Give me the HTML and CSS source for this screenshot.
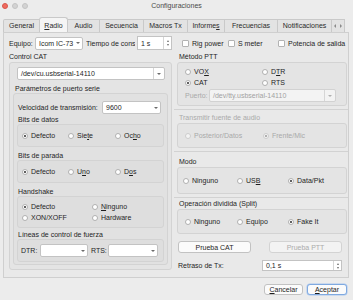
FILE: index.html
```html
<!DOCTYPE html>
<html>
<head>
    <title>Configuraciones</title>
    <link rel="stylesheet" href="styles.css">
</head>
<body>
    <div class="titlebar">
        <div class="lights">
            <span class="light red"></span>
            <span class="light"></span>
            <span class="light"></span>
        </div>
        <div class="title">Configuraciones</div>
        <div></div>
    </div>

    <div class="tabs">
        <div class="tab t-general">General</div>
        <div class="tab t-radio active"><u>R</u>adio</div>
        <div class="tab t-audio">Audio</div>
        <div class="tab t-secuencia">Secuencia</div>
        <div class="tab t-macros">Macros Tx</div>
        <div class="tab t-informes">Informe<u>s</u></div>
        <div class="tab t-frecuencias">Frecuencias</div>
        <div class="tab t-notif">Notificaciones</div>
        <div class="tab-arrows"><span class="arr left"></span><span class="arr right"></span></div>
    </div>

    <div class="pane">
        <div class="top-row">
            <span class="lbl-equipo">Equipo:</span>
            <div class="combo popup c-equipo"><span>Icom IC-73</span><span class="caret"></span></div>
            <span class="lbl-tiempo">Tiempo de cons</span>
            <div class="spin s-tiempo"><span>1 s</span><span class="stepper"><i class="up"></i><i class="down"></i></span></div>
            <label class="check-opt c-rig"><span class="check"></span>Rig power</label>
            <label class="check-opt c-smeter"><span class="check"></span>S meter</label>
            <label class="check-opt c-pot"><span class="check"></span>Potencia de salida</label>
        </div>

        <div class="columns">
            <!-- columna izquierda -->
            <div class="col-left">
                <div class="group-title">Control CAT</div>
                <div class="box cat-box">
                    <div class="combo split c-dev"><span>/dev/cu.usbserial-14110</span><span class="caret"></span></div>
                    <div class="group-title sub">Parámetros de puerto serie</div>
                    <div class="box serial-box">
                        <div class="row-vel">
                            <span class="lbl-vel">Velocidad de transmisión:</span>
                            <div class="combo popup c-vel"><span>9600</span><span class="caret"></span></div>
                        </div>
                        <div class="group-title inner t1">Bits de datos</div>
                        <div class="box opts three">
                            <label class="opt"><span class="radio on"></span>Defecto</label>
                            <label class="opt"><span class="radio"></span>Sie<u>t</u>e</label>
                            <label class="opt"><span class="radio"></span>Oc<u>h</u>o</label>
                        </div>
                        <div class="group-title inner">Bits de parada</div>
                        <div class="box opts three">
                            <label class="opt"><span class="radio on"></span>Defecto</label>
                            <label class="opt"><span class="radio"></span>U<u>n</u>o</label>
                            <label class="opt"><span class="radio"></span>D<u>o</u>s</label>
                        </div>
                        <div class="group-title inner">Handshake</div>
                        <div class="box opts two-left">
                            <label class="opt"><span class="radio on"></span>Defecto</label>
                            <label class="opt"><span class="radio"></span><u>N</u>inguno</label>
                            <label class="opt"><span class="radio"></span>XON/XOFF</label>
                            <label class="opt"><span class="radio"></span>Hardware</label>
                        </div>
                        <div class="group-title inner t-lineas">Líneas de control de fuerza</div>
                        <div class="box lineas">
                            <span class="lbl-dtr">DTR:</span>
                            <div class="combo popup c-dtr"><span></span><span class="caret"></span></div>
                            <span class="lbl-rts">RTS:</span>
                            <div class="combo popup c-rts"><span></span><span class="caret"></span></div>
                        </div>
                    </div>
                </div>
            </div>

            <!-- columna derecha -->
            <div class="col-right">
                <div class="group-title">Método PTT</div>
                <div class="box ptt-box">
                    <div class="opts-grid ptt">
                        <label class="opt"><span class="radio"></span>VO<u>X</u></label>
                        <label class="opt"><span class="radio"></span>D<u>T</u>R</label>
                        <label class="opt"><span class="radio on"></span>CAT</label>
                        <label class="opt"><span class="radio"></span>RTS</label>
                    </div>
                    <div class="row-puerto">
                        <span class="lbl-puerto disabled">Puerto:</span>
                        <div class="combo split off c-puerto"><span>/dev/tty.usbserial-14110</span><span class="caret"></span></div>
                    </div>
                </div>
                <div class="sep first"></div>

                <div class="group-title disabled t-audio-src">Transmitir fuente de audio</div>
                <div class="box opts right fuente">
                    <label class="opt disabled"><span class="radio off"></span>Posterior/Datos</label>
                    <label class="opt disabled"><span class="radio off on"></span>Frente/Mic</label>
                </div>
                <div class="sep"></div>

                <div class="group-title t-modo">Modo</div>
                <div class="box opts right modo">
                    <label class="opt"><span class="radio"></span>Ninguno</label>
                    <label class="opt"><span class="radio"></span>US<u>B</u></label>
                    <label class="opt"><span class="radio on"></span>Data/Pkt</label>
                </div>
                <div class="sep"></div>

                <div class="group-title t-split">Operación dividida (Split)</div>
                <div class="box opts right split-box">
                    <label class="opt"><span class="radio"></span>Ninguno</label>
                    <label class="opt"><span class="radio"></span>Equipo</label>
                    <label class="opt"><span class="radio on"></span>Fake It</label>
                </div>

                <div class="test-buttons">
                    <button class="btn">Prueba CAT</button>
                    <button class="btn off">Prueba PTT</button>
                </div>

                <div class="row-retraso">
                    <span>Retraso de Tx:</span>
                    <div class="spin s-retraso"><span>0,1 s</span><span class="stepper"><i class="up"></i><i class="down"></i></span></div>
                </div>
            </div>
        </div>
    </div>

    <div class="dialog-buttons">
        <button class="btn b-cancel"><u>C</u>ancelar</button>
        <button class="btn b-ok default"><u>A</u>ceptar</button>
    </div>
</body>
</html>
```

FILE: styles.css
```css
* {
    box-sizing: border-box;
}

body {
    margin: 0;
    width: 353px;
    height: 300px;
    overflow: hidden;
    background-color: #ececec;
    font-family: "Liberation Sans", Arial, sans-serif;
    font-size: 7px;
    color: #1e1e1e;
}

u {
    text-decoration: underline;
    text-underline-offset: 1px;
}

.disabled {
    color: #a9a9a9;
}

/* barra de título */
.titlebar {
    height: 11px;
    display: grid;
    grid-template-columns: 1fr auto 1fr;
    align-items: center;
}

.lights {
    display: flex;
    gap: 4px;
    padding-left: 2px;
}

.light {
    width: 6px;
    height: 6px;
    border-radius: 50%;
    background-color: #d3d3d3;
    border: 0.5px solid #c4c4c4;
}

.light.red {
    background-color: #ef6b5f;
    border-color: #d9554b;
}

.title {
    color: #4a4a4a;
}

/* pestañas */
.tabs {
    margin-top: 6px;
    margin-left: 3px;
    height: 15px;
    display: flex;
    align-items: flex-end;
}

.tab {
    height: 13px;
    line-height: 12px;
    text-align: center;
    background-color: #e3e3e3;
    border: 1px solid #c9c9c9;
    border-bottom: none;
    border-left: none;
    color: #2a2a2a;
}

.tab.t-general { width: 37px; border-left: 1px solid #c9c9c9; border-radius: 2px 0 0 0; }
.tab.t-radio { width: 28px; }
.tab.t-audio { width: 32px; }
.tab.t-secuencia { width: 44px; }
.tab.t-macros { width: 44px; }
.tab.t-informes { width: 37px; }
.tab.t-frecuencias { width: 53px; }
.tab.t-notif { width: 54px; }

.tab.active {
    height: 15px;
    line-height: 15px;
    background-color: #f5f5f5;
    border-radius: 3px 3px 0 0;
    border-left: 1px solid #c9c9c9;
    margin-left: -1px;
    width: 29px;
}

.tab-arrows {
    height: 13px;
    width: 13px;
    display: flex;
    align-items: center;
    justify-content: space-around;
    background-color: #e3e3e3;
    border: 1px solid #c9c9c9;
    border-bottom: none;
    border-left: none;
}

.arr {
    width: 0;
    height: 0;
    border-top: 2px solid transparent;
    border-bottom: 2px solid transparent;
}

.arr.left { border-right: 2px solid #8a8a8a; }
.arr.right { border-left: 2px solid #8a8a8a; }

/* panel */
.pane {
    margin: 0 4px 0 3px;
    height: 246px;
    border: 1px solid #cfcfcf;
    background-color: #e9e9e9;
    padding: 3px 0 0 5px;
}

.top-row {
    height: 14px;
    display: flex;
    align-items: center;
}

.lbl-equipo { width: 26px; }
.c-equipo { width: 48px; }
.lbl-tiempo {
    width: 49px;
    margin-left: 3px;
    white-space: nowrap;
    overflow: hidden;
}
.s-tiempo { width: 35px; margin-left: 2px; height: 14px; }

.check-opt {
    display: flex;
    align-items: center;
    white-space: nowrap;
}

.check {
    width: 7px;
    height: 7px;
    background-color: #fff;
    border: 1px solid #b3b3b3;
    border-radius: 1px;
    margin-right: 3px;
}

.c-rig { margin-left: 10px; width: 46px; }
.c-smeter { width: 50px; }
.c-pot { overflow: hidden; width: 70px; }

/* controles */
.combo {
    height: 13px;
    background-color: #fff;
    border: 1px solid #c3c3c3;
    border-radius: 2px;
    display: flex;
    align-items: center;
    justify-content: space-between;
    padding-left: 3px;
    white-space: nowrap;
    overflow: hidden;
}

.caret {
    width: 9px;
    height: 100%;
    display: flex;
    align-items: center;
    justify-content: center;
}

.caret::after {
    content: "";
    border-left: 2px solid transparent;
    border-right: 2px solid transparent;
    border-top: 2.5px solid #6b6b6b;
}

.combo.split .caret {
    border-left: 1px solid #d6d6d6;
    width: 11px;
}

.combo.off {
    background-color: #f3f3f3;
    color: #a2a2a2;
    border-color: #d2d2d2;
}

.combo.off .caret::after {
    border-top-color: #b0b0b0;
}

.spin {
    background-color: #fff;
    border: 1px solid #c3c3c3;
    display: flex;
    align-items: center;
    justify-content: space-between;
    padding-left: 3px;
}

.stepper {
    width: 8px;
    height: 100%;
    border-left: 1px solid #d6d6d6;
    display: flex;
    flex-direction: column;
    align-items: center;
    justify-content: center;
    gap: 2px;
}

.stepper i {
    width: 0;
    height: 0;
    border-left: 1.5px solid transparent;
    border-right: 1.5px solid transparent;
}

.stepper .up { border-bottom: 2px solid #6b6b6b; }
.stepper .down { border-top: 2px solid #6b6b6b; }

.radio {
    width: 6px;
    height: 6px;
    border-radius: 50%;
    background-color: #fff;
    border: 1px solid #b0b0b0;
    margin-right: 3px;
    flex-shrink: 0;
    display: flex;
    align-items: center;
    justify-content: center;
}

.radio.on::after {
    content: "";
    width: 2px;
    height: 2px;
    border-radius: 50%;
    background-color: #2b2b2b;
}

.radio.off {
    background-color: #f4f4f4;
    border-color: #cdcdcd;
}

.radio.off.on::after {
    background-color: #9a9a9a;
}

.opt {
    height: 11px;
    display: flex;
    align-items: center;
    white-space: nowrap;
}

.btn {
    font-family: inherit;
    font-size: 7px;
    color: #1e1e1e;
    height: 12px;
    padding: 0;
    background-color: #fbfbfb;
    border: 1px solid #c2c2c2;
    border-radius: 3px;
}

.btn.off {
    color: #ababab;
    background-color: #f3f3f3;
    border-color: #d3d3d3;
}

/* cajas de grupo */
.columns {
    margin-top: 2px;
    display: flex;
    gap: 5px;
}

.col-left { width: 163px; }
.col-right { width: 170px; }

.group-title {
    height: 9px;
    line-height: 9px;
    white-space: nowrap;
}

.box {
    margin-top: 1px;
    border: 1px solid #d3d3d3;
    border-radius: 3px;
    background-color: #e4e4e4;
}

.cat-box {
    margin-top: 1px;
    height: 208px;
    padding: 4px 3px 0 3px;
}

.c-dev {
    margin-left: 4px;
    width: 148px;
}

.group-title.sub {
    margin-top: 4px;
    padding-left: 2px;
}

.serial-box {
    margin-top: 0;
    height: 172px;
    padding: 7px 3px 0 3px;
    background-color: #e1e1e1;
}

.row-vel {
    height: 13px;
    display: flex;
    align-items: center;
    padding-left: 1px;
}

.lbl-vel { width: 84px; }
.c-vel { width: 59px; }

.group-title.inner {
    margin-top: 4px;
    padding-left: 1px;
}

.group-title.t1 { margin-top: 1px; }
.group-title.t-lineas { margin-top: 2px; }

.serial-box .box {
    margin-top: 0;
    width: 147px;
    background-color: #dedede;
}

.opts {
    display: grid;
    align-content: center;
    padding-left: 4px;
}

.opts.three {
    height: 23px;
    grid-template-columns: 46px 47px auto;
}

.opts.two-left {
    height: 32px;
    grid-template-columns: 70px auto;
}

.lineas {
    height: 23px;
    display: flex;
    align-items: center;
    padding-left: 3px;
}

.lbl-dtr { width: 19px; }
.c-dtr { width: 48px; }
.lbl-rts { margin-left: 3px; width: 17px; }
.c-rts { width: 50px; }

/* columna derecha */
.col-right .group-title {
    padding-left: 2px;
}

.ptt-box {
    height: 44px;
    padding: 3px 0 0 7px;
}

.opts-grid.ptt {
    display: grid;
    grid-template-columns: 77px auto;
}

.row-puerto {
    margin-top: 1px;
    display: flex;
    align-items: center;
    padding-left: 0;
}

.lbl-puerto { width: 24px; }
.c-puerto { width: 127px; }

.sep {
    margin-top: 3px;
    height: 1px;
    background-color: #d2d2d2;
    margin-left: -3px;
    margin-right: -1px;
}

.sep.first { margin-top: 3px; }

.group-title.t-audio-src { margin-top: 3px; }
.group-title.t-modo { margin-top: 5px; }
.group-title.t-split { margin-top: 1px; }

.opts.right {
    height: 25px;
    padding-left: 7px;
}

.fuente {
    grid-template-columns: 78px auto;
}

.modo {
    height: 27px;
    grid-template-columns: 54px 51px auto;
    padding-left: 5px;
}

.opts.modo { padding-left: 5px; height: 27px; }

.split-box {
    grid-template-columns: 52px 51px auto;
}

.col-right .sep + .group-title + .box,
.col-right .sep ~ .box {
    margin-top: 1px;
}

.test-buttons {
    margin-top: 7px;
    display: flex;
    gap: 18px;
    padding-left: 1px;
}

.test-buttons .btn {
    width: 73px;
}

.row-retraso {
    margin-top: 7px;
    height: 11px;
    display: flex;
    align-items: center;
    justify-content: space-between;
    padding-left: 1px;
    padding-right: 5px;
}

.s-retraso {
    width: 80px;
    height: 11px;
}

/* botones del diálogo */
.dialog-buttons {
    margin-top: 6px;
    display: flex;
    justify-content: flex-end;
    gap: 4px;
    padding-right: 6px;
}

.b-cancel { width: 39px; height: 11px; }
.b-ok { width: 40px; height: 11px; }

.btn.default {
    border-color: #7fa9e0;
    box-shadow: 0 0 0 0.5px #a9c6ee;
}
```
